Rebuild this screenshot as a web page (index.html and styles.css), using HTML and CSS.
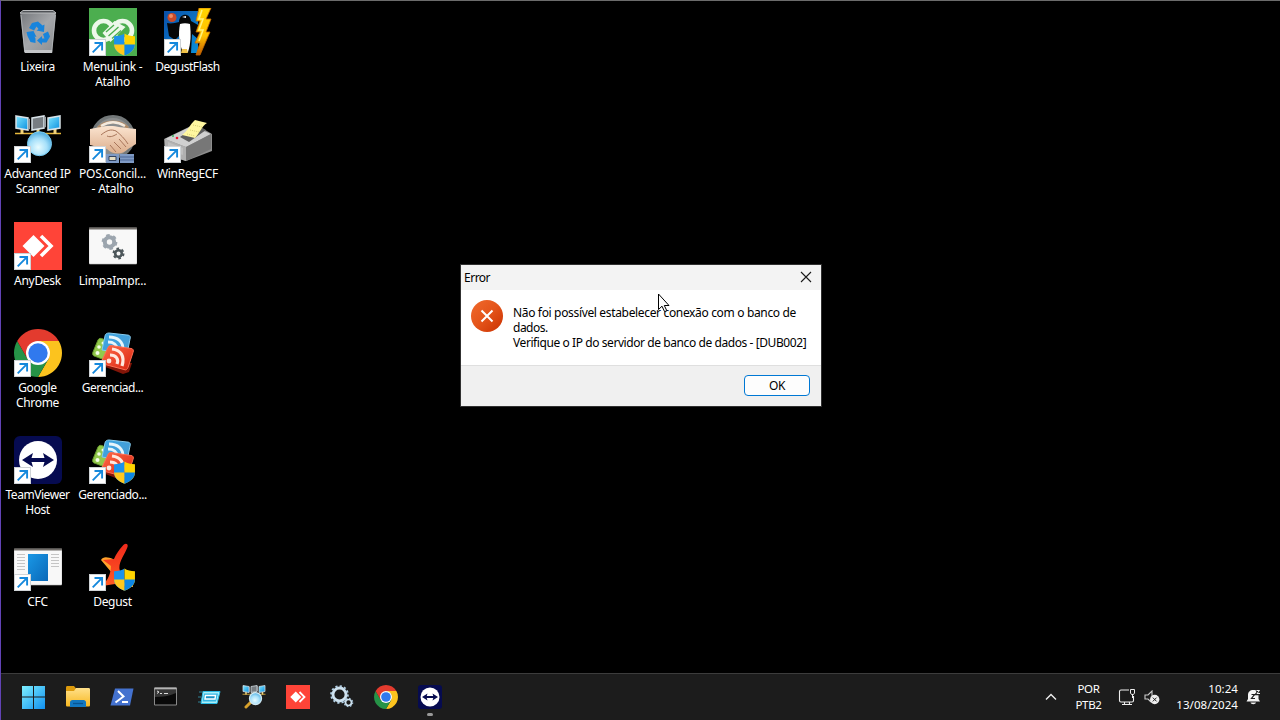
FILE: index.html
```html
<!DOCTYPE html>
<html lang="pt-BR">
<head>
<meta charset="utf-8">
<title>Desktop</title>
<link rel="stylesheet" href="styles.css">
</head>
<body>
<svg class="defs" width="0" height="0">
  <defs>
    <linearGradient id="gBin" x1="0" x2="1" y1="0" y2="1"><stop offset="0" stop-color="#74777b"/><stop offset=".5" stop-color="#a5a7aa"/><stop offset="1" stop-color="#8b8d90"/></linearGradient>
    <linearGradient id="gScreen" x1="0" x2="1" y1="0" y2="1"><stop offset="0" stop-color="#7fe6ff"/><stop offset="1" stop-color="#0a8fe0"/></linearGradient>
    <radialGradient id="gOrb" cx=".45" cy=".65" r=".6"><stop offset="0" stop-color="#e8fcff"/><stop offset=".6" stop-color="#a6e0fa"/><stop offset="1" stop-color="#5ab4e4"/></radialGradient>
    <linearGradient id="gSky" x1="0" x2="1" y1="0" y2="1"><stop offset="0" stop-color="#0a4fa8"/><stop offset="1" stop-color="#0a8fd8"/></linearGradient>
    <linearGradient id="gBolt" x1="0" x2="0" y1="0" y2="1"><stop offset="0" stop-color="#ffd400"/><stop offset=".6" stop-color="#ffc000"/><stop offset="1" stop-color="#c05a00"/></linearGradient>
    <linearGradient id="gRed" x1="0" x2="1" y1="0" y2="1"><stop offset="0" stop-color="#ff6a48"/><stop offset="1" stop-color="#d92410"/></linearGradient>
    <linearGradient id="gBlue" x1="0" x2="1" y1="0" y2="1"><stop offset="0" stop-color="#3aa5e4"/><stop offset="1" stop-color="#4a9bd0"/></linearGradient>
    <linearGradient id="gApp" x1="0" x2="1" y1="0" y2="1"><stop offset="0" stop-color="#1a98e6"/><stop offset="1" stop-color="#0a68b8"/></linearGradient>
    <linearGradient id="gWin" x1="0" x2="1" y1="0" y2="1"><stop offset="0" stop-color="#7df0ff"/><stop offset="1" stop-color="#1090f0"/></linearGradient>
    <linearGradient id="gFolder" x1="0" x2="0" y1="0" y2="1"><stop offset="0" stop-color="#ffe08a"/><stop offset="1" stop-color="#f8b820"/></linearGradient>
    <linearGradient id="gErr" x1="0" x2="1" y1="0" y2="1"><stop offset="0" stop-color="#f06a2c"/><stop offset=".5" stop-color="#e4541a"/><stop offset="1" stop-color="#c93000"/></linearGradient>
    <linearGradient id="gDegust" x1="0" x2="0" y1="0" y2="1"><stop offset="0" stop-color="#f02a1c"/><stop offset="1" stop-color="#ff5a24"/></linearGradient>
    <linearGradient id="gHand" x1="0" x2="0" y1="0" y2="1"><stop offset="0" stop-color="#fbe4d0"/><stop offset="1" stop-color="#dcae8c"/></linearGradient>

    <symbol id="arrow" viewBox="0 0 17 17">
      <rect x=".5" y=".5" width="16" height="16" fill="#fff" stroke="#cfd3d6"/>
      <path d="M3.700 13.300 12.600 4.400M5.500 4h7.600v7.600" fill="none" stroke="#1488dc" stroke-width="1.900"/>
    </symbol>
    <symbol id="shield" viewBox="0 0 22 22">
      <path d="M11 .5C8.500 2.200 5 3 1 3v8c0 5 4 8.500 10 10.700V.5z" fill="#1b92ec"/>
      <path d="M11 .5c2.500 1.700 6 2.500 10 2.500v8c0 5-4 8.500-10 10.700V.5z" fill="#ffd400"/>
      <path d="M1 11h10v10.700C5 19.500 1.300 16 1 11z" fill="#ffc81e"/>
      <path d="M21 11H11v10.700c6-2.200 9.700-5.700 10-10.700z" fill="#0d86e4"/>
    </symbol>
    <symbol id="bin" viewBox="0 0 48 48">
      <path d="M6 4 42 4 38 44.500 10.500 44.500z" fill="url(#gBin)"/>
      <path d="M9 2.500h30l3 2.500H6z" fill="#4f5256" stroke="#b9bbbd"/>
      <path d="M7 7 10.700 44h27L41.500 7" fill="none" stroke="#b9bcbf" stroke-width=".8"/>
      <path d="M10.500 42h27.700v3H11z" fill="#c4c6c8"/>
      <g fill="#1784dc"><path d="m18 15 6-1.500 4.500 4 2-1-.5 7.500-7.500-1.500 2-1.500-2-2.500-2.500 4-5-2.500z"/><path d="m29 26 5-2.500 2 5-3.500 6H28V37l-5-4.500 5-4.500v2.500h2.500z"/><path d="m12.500 24 7-1 3 6-2-.5 1 2v4.500l-5-1-3-6z"/></g>
    </symbol>
    <symbol id="menulink" viewBox="0 0 48 48">
      <rect width="48" height="48" fill="#4cae4f"/>
      <g fill="none" stroke="#edf8ea" stroke-width="4.600"><circle cx="14.500" cy="22.500" r="9.500"/><circle cx="33.500" cy="22.500" r="9.500"/></g>
      <path d="m13.500 25 12-12 11 6-15 15z" fill="#edf8ea"/>
      <path d="m17 24 8-7M19.500 28l10-9M23 30.500l9-8" stroke="#4cae4f" stroke-width="1.300"/>
    </symbol>
    <symbol id="flash" viewBox="0 0 48 48">
      <path d="M0 3h34v42H0z" fill="url(#gSky)"/>
      <circle cx="8" cy="9.500" r="4.500" fill="#c94a28"/><circle cx="7" cy="8" r="2" fill="#ef8c62"/>
      <path d="M3 15c4 1 8 0 12-1 0-9 11-10 12-1l7 4v14l-6-5-1 19H15V28l-4 4-6-4z" fill="#060606"/>
      <path d="M16 16c3-1 7-1 10 0 1 10 1 19-2 28h-5c-4-8-5-18-3-28z" fill="#fff"/>
      <path d="m18 9 4-1v2z" fill="#fff"/><path d="M18 41h5l1 4h-7z" fill="#f0c248"/>
      <path d="M35 0h12l-5 11h5l-5 13h4L36 47h-4l4-12h-5l5-11h-4l4-11h-4z" fill="url(#gBolt)" stroke="#c86a00" stroke-width=".8"/>
      <path d="m38 2-3 9h4l-4 11h4l-4 11" stroke="#fff27a" stroke-width="1.600" fill="none"/>
    </symbol>
    <symbol id="pcs" viewBox="0 0 48 48">
      <path d="M1 18.500h46" stroke="#e6b93c" stroke-width="1.600"/>
      <path d="M8 14v5M24 14v5M41 14v5" stroke="#f1d37a" stroke-width="3"/>
      <g stroke="#d8e2e8" stroke-width="1.500"><path d="m2 1 12 2v12L2 13z" fill="url(#gScreen)"/><path d="m18 3 12-2v12l-12 2z" fill="#777d82"/><path d="m34 3 12-2v12l-12 2z" fill="url(#gScreen)"/></g>
      <path d="m14 3 2 1v10l-2 1M30 1l2 1v10l-2 1" fill="#9aa1a6"/>
    </symbol>
    <symbol id="ipscan" viewBox="0 0 48 48">
      <use href="#pcs" width="48" height="48"/>
      <circle cx="25.500" cy="28.700" r="12" fill="url(#gOrb)" stroke="#75c8ef"/>
    </symbol>
    <symbol id="ipglass" viewBox="0 0 48 48">
      <use href="#pcs" width="48" height="48"/>
      <path d="M17 35 8 44" stroke="#d7a02b" stroke-width="6" stroke-linecap="round"/>
      <circle cx="27" cy="27" r="12" fill="url(#gOrb)" stroke="#d2eaf5" stroke-width="2.500"/>
    </symbol>
    <symbol id="hands" viewBox="0 0 48 48">
      <circle cx="24" cy="22" r="20.500" fill="#8a8d8e" stroke="#737879" stroke-width="3"/>
      <path d="M9 13c8-8 22-8 30 0" stroke="#b08a66" stroke-width="3" fill="none"/>
      <path d="M12 11c8-5 16-5 24 0" stroke="#f3e9dd" stroke-width="2.500" fill="none"/>
      <path d="M1 14c8-1 12-3 20-3 7 0 12 2 26 3v15l-8 5c-6 6-15 6-21 0-6-1-11-3-17-4z" fill="url(#gHand)"/>
      <path d="M12 20c6-5 10-6 15-4 4 3 9 8 12 13M18 21c4 2 8-1 10-2M25 27l7 7M21 30l6 7M30 24l7 8" stroke="#a8755a" stroke-width="1" fill="none"/>
      <path d="M17 39h13v9H17zM31 39h14v9H31z" fill="#7f9ac4"/><path d="M20 41.500h7v4h-7z" fill="#e4ddc3" stroke="#33435f"/><path d="M31 42h14M31 45h14" stroke="#4d6795"/>
    </symbol>
    <symbol id="ecf" viewBox="0 0 48 48">
      <path d="m0 24 31-15 17 10v17L22 46 1 40z" fill="#8d8d8d"/>
      <path d="m1 24 27-13 19 8-25 13z" fill="#d0d0d0"/>
      <path d="m1 24 21 8v14L1 39z" fill="#b0b0b0"/>
      <path d="m22 32 25-13v15L22 46z" fill="#777"/>
      <path d="m4 27 15 6v7L4 35z" fill="#bfbfbf"/>
      <path d="m16 22 17-12 9 5-17 12z" fill="#5e5e5e"/>
      <path d="M18 20c6-4 8-11 13-15l12 3c-6 4-7 10-12 15z" fill="#fff7a0"/>
      <path d="m29 10 9 2M26 15l9 2M23 19l8 2" stroke="#d8cf72" stroke-dasharray="1 1"/>
      <circle cx="13" cy="23" r="1.300" fill="#ed1730"/><circle cx="9" cy="21" r="1" fill="#36b05b"/>
    </symbol>
    <symbol id="anydesk" viewBox="0 0 48 48">
      <rect width="48" height="48" fill="#ff4438"/>
      <path d="M19.500 13 30.500 24l-11 11-11-11z" fill="#fff"/><path d="m27 14 10 10-10 10" fill="none" stroke="#fff" stroke-width="3.600"/>
    </symbol>
    <symbol id="gears" viewBox="0 0 48 48">
      <rect y="6" width="48" height="36" rx="1" fill="#f8f8f8" stroke="#c5c5c5" stroke-width=".6"/><path d="M0 5.500h48V7.500H0z" fill="#706c68"/>
      <circle cx="20.500" cy="20" r="4.700" fill="none" stroke="#9ca5ae" stroke-width="4"/><circle cx="20.500" cy="20" r="6.600" fill="none" stroke="#9ca5ae" stroke-width="2.600" stroke-dasharray="3.450 3.460"/>
      <circle cx="29.500" cy="31.500" r="3.300" fill="none" stroke="#4d575b" stroke-width="2.600"/><circle cx="29.500" cy="31.500" r="5" fill="none" stroke="#4d575b" stroke-width="2" stroke-dasharray="2.600 2.636"/>
    </symbol>
    <symbol id="chrome" viewBox="0 0 48 48">
      <path d="M3.220 12A24 24 0 0 1 44.780 12H24z" fill="#e33b2e"/>
      <path d="M44.780 12A24 24 0 0 1 24 48L34.400 30 34.400 18 24 12z" fill="#fcc31e"/>
      <path d="M24 48A24 24 0 0 1 3.220 12L13.600 30 24 36 34.400 30z" fill="#269347"/>
      <path d="M3.220 12 13.600 30 24 24V12z" fill="#e33b2e"/>
      <circle cx="24" cy="24" r="12" fill="#fff"/><circle cx="24" cy="24" r="9.700" fill="#3079ee"/>
    </symbol>
    <symbol id="feed" viewBox="0 0 48 48">
      <path d="M9 11c1-2 3-2 5-1l8 4-4 18-10-4c-4-1-5-2-4-5z" fill="#92c84b" stroke="#679a2d"/><circle cx="10" cy="18" r="1.800" fill="#f4ffe8"/><circle cx="8.500" cy="24" r="2" fill="#f4ffe8"/><circle cx="14" cy="14" r="1.500" fill="#f4ffe8"/>
      <path d="m20 4 18 2c3 0 4 2 3 4l-3 15-25-4 3-14c0-2 2-3 4-3z" fill="url(#gBlue)" stroke="#86cbed"/>
      <path d="M20 8c9 0 14 5 14 12M19 13c6 0 9 3 9 7" fill="none" stroke="#e7f5fb" stroke-width="2.800"/>
      <path d="m13 33 1 4 20 8 6-2 3-9z" fill="#821508"/>
      <path d="m22 16.500 20 3c2 0 3 2 2 4l-5 15c-1 2-2 3-4 2l-19-5c-3-1-4-2-3-4l6-13c1-2 2-2 3-2z" fill="url(#gRed)" stroke="#ff6d52"/>
      <path d="M23 20c9 1 13 7 10 17M21 26c6 0 9 4 7 9" fill="none" stroke="#ffe8df" stroke-width="3.200"/><circle cx="20" cy="32" r="2.400" fill="#ffe8df"/>
    </symbol>
    <symbol id="tv" viewBox="0 0 48 48">
      <rect width="48" height="48" rx="6" fill="#060b50"/><circle cx="24" cy="24" r="19" fill="#fff"/>
      <path d="m8 24 11-7-1.500 5h13L29 17l11 7-11 7 1.500-5h-13l1.500 5z" fill="#060b50"/>
    </symbol>
    <symbol id="cfc" viewBox="0 0 48 48">
      <rect y="6" width="48" height="36" rx="1" fill="#f8f8f8" stroke="#bdbdbd" stroke-width=".6"/><path d="M0 5.500h48V7.500H0z" fill="#706c68"/>
      <rect x="14" y="11" width="20" height="27" fill="url(#gApp)"/>
      <path d="M3 11.500h8M3 14.500h8M3 17.500h8M3 20.500h8M3 23.500h8M3 26.500h8M37 11.500h8M37 14.500h8M37 17.500h8M37 20.500h8M37 23.500h8" stroke="#c5c5c5"/>
    </symbol>
    <symbol id="degust" viewBox="0 0 48 48">
      <path d="M12 17c2-4 7-3 12-1l5 24 15-1v5c-10 0-17-4-21-14z" fill="#ffa12a"/>
      <path d="M33.500 3c3-4 6-2 5 1-3 8-9 15-8 22 1 5 2 9 2 14L13 43c6-6 9-13 9-20l-8-6 11-1c2-5 5-9 8.500-13z" fill="url(#gDegust)"/>
    </symbol>
  </defs>
</svg>

<div class="screen">
  <main class="desktop">
    <div class="item"><div class="icon"><svg><use href="#bin"/></svg></div><span class="label">Lixeira</span></div>
    <div class="item"><div class="icon"><svg><use href="#ipscan"/></svg><svg class="arrow"><use href="#arrow"/></svg></div><span class="label">Advanced IP<br>Scanner</span></div>
    <div class="item"><div class="icon"><svg><use href="#anydesk"/></svg><svg class="arrow"><use href="#arrow"/></svg></div><span class="label">AnyDesk</span></div>
    <div class="item"><div class="icon"><svg><use href="#chrome"/></svg><svg class="arrow"><use href="#arrow"/></svg></div><span class="label">Google<br>Chrome</span></div>
    <div class="item"><div class="icon"><svg><use href="#tv"/></svg><svg class="arrow"><use href="#arrow"/></svg></div><span class="label tight">TeamViewer<br>Host</span></div>
    <div class="item"><div class="icon"><svg><use href="#cfc"/></svg><svg class="arrow"><use href="#arrow"/></svg></div><span class="label">CFC</span></div>
    <div class="item"><div class="icon"><svg><use href="#menulink"/></svg><svg class="arrow"><use href="#arrow"/></svg><svg class="shield"><use href="#shield"/></svg></div><span class="label">MenuLink -<br>Atalho</span></div>
    <div class="item"><div class="icon"><svg><use href="#hands"/></svg><svg class="arrow"><use href="#arrow"/></svg></div><span class="label wide">POS.Concil...<br>- Atalho</span></div>
    <div class="item"><div class="icon"><svg><use href="#gears"/></svg></div><span class="label wide">LimpaImpr...</span></div>
    <div class="item"><div class="icon"><svg><use href="#feed"/></svg><svg class="arrow"><use href="#arrow"/></svg></div><span class="label tight">Gerenciad...</span></div>
    <div class="item"><div class="icon"><svg><use href="#feed"/></svg><svg class="arrow"><use href="#arrow"/></svg><svg class="shield"><use href="#shield"/></svg></div><span class="label tight">Gerenciado...</span></div>
    <div class="item"><div class="icon"><svg><use href="#degust"/></svg><svg class="arrow"><use href="#arrow"/></svg><svg class="shield"><use href="#shield"/></svg></div><span class="label">Degust</span></div>
    <div class="item"><div class="icon"><svg><use href="#flash"/></svg><svg class="arrow"><use href="#arrow"/></svg></div><span class="label tight">DegustFlash</span></div>
    <div class="item"><div class="icon"><svg><use href="#ecf"/></svg><svg class="arrow"><use href="#arrow"/></svg></div><span class="label">WinRegECF</span></div>
  </main>

  <section class="dialog">
    <header class="dialog-title"><span>Error</span><svg class="close" viewBox="0 0 12 12"><path d="m1 1 10 10M11 1 1 11" stroke="#1a1a1a" stroke-width="1.100"/></svg></header>
    <div class="dialog-body">
      <svg class="error" viewBox="0 0 32 32"><circle cx="16" cy="16" r="16" fill="url(#gErr)"/><path d="m10.500 10.500 11 11M21.500 10.500l-11 11" stroke="#fff" stroke-width="2"/></svg>
      <p class="message"><span class="m1">Não foi possível estabelecer conexão com o banco de</span><br>dados.<br><span class="m2">Verifique o IP do servidor de banco de dados - [DUB002]</span></p>
    </div>
    <footer class="dialog-footer"><button class="ok">OK</button></footer>
  </section>

  <svg class="cursor" viewBox="0 0 13 20"><path d="M1.500 1v15.500l3.500-3.300 2.600 5.500 2.200-1-2.500-5.200H12z" fill="#fff" stroke="#000"/></svg>

  <nav class="taskbar">
    <div class="apps">
      <svg viewBox="0 0 24 24"><path d="M0 1h11v10.500H0zM12 1h11v10.500H12zM0 12.500h11V24H0zM12 12.500h11V24H12z" fill="url(#gWin)"/></svg>
      <svg viewBox="0 0 24 24"><path d="M0 2.500C0 1.500.500 1 1.500 1H8l2 2.500V8H0z" fill="#dc9a0c"/><path d="M0 6h8l2-3h12.500c1 0 1.500.500 1.500 1.500V20c0 1-.5 1.500-1.500 1.500h-21C.5 21.500 0 21 0 20z" fill="url(#gFolder)"/><path d="M4 22v-4.500C4 16 5 15 6.500 15h11c1.500 0 2.500 1 2.500 2.500V22z" fill="#1277c0"/><path d="M7 18.500h10" stroke="#075492" stroke-width="1.300"/></svg>
      <svg viewBox="0 0 24 24"><path d="M5 3.500h18.500L20 20.500H.5z" fill="#4472cf"/><path d="m8 6 5.500 5.500-8 6M12 17h6" fill="none" stroke="#fff" stroke-width="2"/></svg>
      <svg viewBox="0 0 24 24"><path d="M.5 3h22v17H.5z" fill="#090909" stroke="#8a8a8a"/><path d="M.5 2.500h22v2H.5z" fill="#b4b4b4"/><path d="M1 12c7 0 14-1 21-4V5H1z" fill="#363636"/><path d="m3 6 2 1-2 1.500M6 8.500h2M10 8.500h4" stroke="#ddd" fill="none"/></svg>
      <svg viewBox="0 0 24 24"><path d="M5 6.500h17l-3 12H3z" fill="#a8effa" stroke="#2bbbe5"/><path d="M6 8.500h14l-2 8H4.500z" fill="#35b5e2"/><path d="M7.500 10.500h10l-.5 3.500H7z" fill="#168fc2" stroke="#fff" stroke-width="1.400"/><path d="M1 7h4M0 12h3M0 17h3" stroke="#2f8297"/></svg>
      <svg><use href="#ipglass"/></svg>
      <svg><use href="#anydesk"/></svg>
      <svg viewBox="0 0 24 24"><g fill="none"><circle cx="9.500" cy="9.500" r="6.500" stroke="#cfe2ef" stroke-width="2.800"/><circle cx="9.500" cy="9.500" r="8.300" stroke="#b4d0e4" stroke-width="2" stroke-dasharray="2.170 2.170"/><circle cx="18.500" cy="17.500" r="3" stroke="#cfe2ef" stroke-width="1.700"/><circle cx="18.500" cy="17.500" r="4.200" stroke="#a8c5da" stroke-width="1.200" stroke-dasharray="1.650 1.650"/></g></svg>
      <svg><use href="#chrome"/></svg>
      <div class="running"><svg><use href="#tv"/></svg><i></i></div>
    </div>
    <div class="tray">
      <svg class="chev" viewBox="0 0 12 8"><path d="m1 6.500 5-5 5 5" fill="none" stroke="#eee" stroke-width="1.400"/></svg>
      <div class="lang">POR<br>PTB2</div>
      <svg class="net" viewBox="0 0 18 18"><path d="M11 2H3C2 2 1.500 2.500 1.500 3.500v9c0 1 .5 1.500 1.500 1.500h11c1 0 1.500-.5 1.500-1.500V8M4 16.500h10M6.500 14v2.500M11.500 14v2.500" fill="none" stroke="#eee" stroke-width="1.100"/><path d="M12.500 1.500h4V5l-1 1.500h-2l-1-1.500z" fill="#1c1c1c" stroke="#eee"/><path d="M14.500 6v4" stroke="#eee"/></svg>
      <svg class="vol" viewBox="0 0 16 15"><path d="M7 12 4 9H1V5h3l4-4v5" fill="none" stroke="#ccc" stroke-width="1.100"/><circle cx="10.700" cy="9.500" r="4.700" fill="#eee"/><path d="m8.800 7.600 3.800 3.800m0-3.800-3.800 3.800" stroke="#222"/></svg>
      <div class="clock">10:24<br>13/08/2024</div>
      <svg class="bell" viewBox="0 0 15 16"><path d="M.5 12.500 2 10V6c0-3 2-5 5.300-5 3.200 0 5.200 2 5.200 5v4l1.500 2.500zM4.500 13.500h5.500c-.5 2.300-5 2.300-5.500 0z" fill="#f4f4f4"/><path d="M5.500 5.500h3l-3 4H9" fill="none" stroke="#1c1c1c" stroke-width="1.200"/><path d="M10 1.500h3.500L10.500 5H14" fill="none" stroke="#1c1c1c" stroke-width="2.500"/><path d="M10.500 1.500h3L11 4.500h3" fill="none" stroke="#eee"/></svg>
    </div>
  </nav>
</div>
</body>
</html>
```
FILE: styles.css
```css
* { box-sizing: border-box; }
body { margin: 0; background: #000; font-family: "Noto Sans", "Open Sans", sans-serif; font-size: 12px; line-height: 15px; }
svg { display: block; }
.defs { position: absolute; }
.screen { position: relative; width: 1280px; height: 720px; overflow: hidden; display: flex; flex-direction: column; border-top: 1px solid #6b6b6b; border-left: 1px solid #6243b5; background: #000; }
.desktop { height: 672px; padding: 7px 0 0; display: grid; grid-auto-flow: column; grid-template-rows: repeat(6, 107px); grid-auto-columns: 75px; justify-content: start; }
.item { display: flex; flex-direction: column; align-items: center; width: 74px; }
.icon { position: relative; width: 48px; height: 48px; }
.icon > svg { width: 48px; height: 48px; }
.icon > .arrow { position: absolute; left: 0; bottom: 0; width: 17px; height: 17px; }
.icon > .shield { position: absolute; right: 1px; bottom: 0; width: 23px; height: 23px; }
.label { margin: 3px 0 0 -1px; color: #fff; text-align: center; white-space: nowrap; letter-spacing: -0.3px; }
.label.tight { letter-spacing: -0.45px; }
.label.wide { letter-spacing: -0.2px; }

.dialog { position: absolute; left: 459px; top: 263px; width: 362px; height: 143px; display: flex; flex-direction: column; border: 1px solid #303030; background: #fff; color: #000; }
.dialog-title { height: 25px; padding: 0 9px 0 3px; display: flex; align-items: center; justify-content: space-between; background: #f3f3f3; letter-spacing: -0.5px; }
.close { width: 12px; height: 12px; margin-top: -1px; }
.dialog-body { height: 75px; padding: 10px 0 0 10px; display: flex; gap: 10px; }
.error { width: 32px; height: 32px; }
.message { margin: 5px 0 0; white-space: nowrap; letter-spacing: -0.5px; }
.m1 { letter-spacing: -0.34px; }
.m2 { letter-spacing: -0.42px; }
.dialog-footer { flex: 1; padding: 9px 11px 0 0; display: flex; justify-content: flex-end; align-items: flex-start; border-top: 1px solid #dfdfdf; background: #f0f0f0; }
.ok { width: 66px; height: 21px; padding: 0; border: 1px solid #0078d4; border-radius: 4px; background: #fdfdfd; font: inherit; color: #000; letter-spacing: -0.4px; }
.cursor { position: absolute; left: 656px; top: 292px; width: 13px; height: 20px; }

.taskbar { height: 47px; display: flex; justify-content: space-between; border-top: 1px solid #3c3c3c; background: #1c1c1c; color: #fff; }
.apps { display: flex; align-items: flex-start; gap: 20px; padding: 11px 0 0 21px; }
.apps svg { width: 24px; height: 24px; }
.running { display: flex; flex-direction: column; align-items: center; gap: 4px; }
.running i { width: 6px; height: 3px; border-radius: 2px; background: #999; }
.tray { display: flex; align-items: center; padding: 0 19px 0 0; font-size: 11.5px; line-height: 16px; }
.chev { width: 12px; height: 8px; margin-right: 18px; }
.lang { width: 27px; text-align: center; letter-spacing: -0.3px; margin-right: 16px; }
.net { width: 18px; height: 18px; margin-right: 8px; }
.vol { width: 16px; height: 15px; margin-right: 14px; }
.clock { width: 64px; text-align: right; margin-right: 8px; white-space: nowrap; letter-spacing: 0.05px; }
.bell { width: 15px; height: 16px; }
```
